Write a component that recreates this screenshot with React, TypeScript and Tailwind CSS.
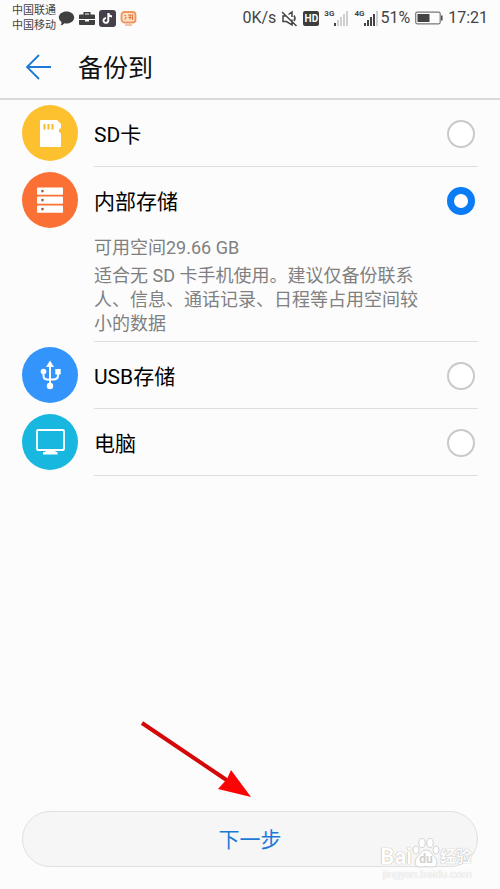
import { useState } from "react";

interface BackupTarget {
  id: string;
  label: string;
  color: string;
  icon: React.ReactNode;
  space?: string;
  note?: string;
}

const SdIcon = () => (
  <svg viewBox="0 0 56 56" className="size-14" fill="none" aria-hidden="true">
    <path
      d="M18 16a1 1 0 0 1 1-1h16l4 4v4l-2 1.500v2.500l2 1.500V41a1 1 0 0 1-1 1H19a1 1 0 0 1-1-1z"
      fill="#fff"
    />
    <path d="M22.500 19v5.500M26.500 19v5.500M30.500 19v5.500" stroke="#fbc02d" strokeWidth="2.200" />
  </svg>
);

const ServerIcon = () => (
  <svg viewBox="0 0 56 56" className="size-14" fill="#fff" aria-hidden="true">
    <rect x="15" y="15.500" width="26" height="7.300" rx="0.800" />
    <rect x="15" y="24.500" width="26" height="7.300" rx="0.800" />
    <rect x="15" y="33.500" width="26" height="7.300" rx="0.800" />
    <g fill="#9a5a3c">
      <circle cx="20.500" cy="19.100" r="1.300" />
      <circle cx="20.500" cy="28.100" r="1.300" />
      <circle cx="20.500" cy="37.100" r="1.300" />
    </g>
  </svg>
);

const UsbIcon = () => (
  <svg viewBox="0 0 56 56" className="size-14" fill="#fff" aria-hidden="true">
    <path d="M28 13.500l4 6.500h-8z" />
    <circle cx="28" cy="39" r="3.200" />
    <rect x="33.300" y="22" width="5.400" height="5.400" rx="0.600" />
    <circle cx="21.500" cy="24.500" r="2.800" />
    <path
      d="M28 18v20M21.500 25v3.500q0 4 4 4h5.500q5 0 5-4V25"
      fill="none"
      stroke="#fff"
      strokeWidth="2"
    />
  </svg>
);

const ComputerIcon = () => (
  <svg viewBox="0 0 56 56" className="size-14" fill="none" aria-hidden="true">
    <rect x="15" y="16" width="27" height="20" rx="1" stroke="#fff" strokeWidth="1.800" />
    <path d="M23.500 37h10v1h2v2.500H21V38h2.500z" fill="#fff" />
  </svg>
);

const targets: BackupTarget[] = [
  { id: "sd", label: "SD卡", color: "bg-[#fdc02f]", icon: <SdIcon /> },
  {
    id: "internal",
    label: "内部存储",
    color: "bg-[#fa7035]",
    icon: <ServerIcon />,
    space: "可用空间29.66 GB",
    note: "适合无 SD 卡手机使用。建议仅备份联系人、信息、通话记录、日程等占用空间较小的数据",
  },
  { id: "usb", label: "USB存储", color: "bg-[#3395fb]", icon: <UsbIcon /> },
  { id: "pc", label: "电脑", color: "bg-[#18b7e0]", icon: <ComputerIcon /> },
];

const Signal = ({ type, level }: { type: string; level: number }) => (
  <div className="flex h-4 items-end">
    <span className="self-start text-[8px] leading-[8px] font-bold">{type}</span>
    <svg width="15" height="16" viewBox="0 0 15 16" aria-hidden="true">
      {[3, 6, 9, 12, 15].map((height, i) => (
        <rect
          key={height}
          x={i * 3}
          y={16 - height}
          width="2"
          height={height}
          fill={i < level ? "#444" : "#cfcfcf"}
        />
      ))}
    </svg>
  </div>
);

const StatusBar = () => (
  <div className="flex h-9 items-start justify-between px-3 text-[#444]">
    <div className="flex gap-0.5 pt-[3px]">
      <div className="text-[11px] leading-[15px]">
        <div>中国联通</div>
        <div>中国移动</div>
      </div>
      <div className="flex items-center gap-1 text-[#404040]">
        <svg width="17" height="17" viewBox="0 0 17 17" fill="currentColor" aria-hidden="true">
          <path d="M8.500 1.500c4.300 0 7.700 2.600 7.700 6s-3.400 6-7.700 6q-1 0-2-.2Q5 15 2.500 15.500q1.300-1.500 1-3.400Q.8 10.300.8 7.500c0-3.400 3.400-6 7.700-6z" />
        </svg>
        <svg width="16" height="15" viewBox="0 0 16 15" fill="currentColor" aria-hidden="true">
          <path
            fillRule="evenodd"
            d="M4.500 3.500V1h7v2.500H15a1 1 0 0 1 1 1V8H0V4.500a1 1 0 0 1 1-1zM6 3.500h4v-1H6zM0 9h6v1.500h4V9h6v4a1 1 0 0 1-1 1H1a1 1 0 0 1-1-1z"
          />
        </svg>
        <svg width="17" height="17" viewBox="0 0 17 17" aria-hidden="true">
          <rect width="17" height="17" rx="3" fill="#46404a" />
          <path
            d="M9.300 3v7.600a2.400 2.400 0 1 1-2.200-2.500M9.300 3.200q.5 3 3.700 3.300"
            fill="none"
            stroke="#fff"
            strokeWidth="1.900"
          />
        </svg>
        <svg width="17" height="17" viewBox="0 0 17 17" aria-hidden="true">
          <rect x="1.500" y="2" width="14" height="10.500" rx="3" fill="#fbe3c8" stroke="#ee9560" strokeWidth="1.800" />
          <path d="M4.500 5l1.500 1M4.500 9.500l2-2.500M8 5h4.500v5M8.500 7.500h3M10 5v4.500" stroke="#e5763c" strokeWidth="1.200" fill="none" />
          <path d="M5 15h7" stroke="#f3b08a" strokeWidth="1.500" />
        </svg>
      </div>
    </div>
    <div className="flex h-9 items-center gap-[5px] text-base">
      <span>0K/s</span>
      <svg width="17" height="17" viewBox="0 0 17 17" fill="none" stroke="currentColor" strokeWidth="1.500" aria-hidden="true">
        <path d="M5.500 6H2v5.500h3.500l5.500 3.500V9.500M7.500 4.500L11 2v5M13 5.500q2 3 0 5.500M1 2l14.500 14" />
      </svg>
      <span className="flex h-[15px] w-4 items-center justify-center rounded-[2px] bg-[#3c3c3c] text-[10px] font-bold text-white">
        HD
      </span>
      <Signal type="3G" level={1} />
      <Signal type="4G" level={4} />
      <span className="-ml-1">51%</span>
      <svg width="28" height="14" viewBox="0 0 28 14" aria-hidden="true">
        <rect x="0.700" y="1.200" width="24.500" height="11.600" rx="1.500" fill="none" stroke="#777" strokeWidth="1.200" />
        <rect x="2.500" y="3" width="12" height="8" fill="#444" />
        <path d="M26.800 4.500v5" stroke="#444" strokeWidth="1.500" />
      </svg>
      <span>17:21</span>
    </div>
  </div>
);

const Watermark = () => (
  <div className="pointer-events-none absolute right-7 bottom-2 text-white [text-shadow:0_0_1px_#888]">
    <div className="flex items-end justify-end">
      <span className="text-[22px] leading-6 font-bold">Bai</span>
      <span className="relative flex w-7 justify-center">
        <svg width="28" height="32" viewBox="0 0 28 32" fill="#fff" stroke="#c9c9c9" strokeWidth="0.800" aria-hidden="true">
          <ellipse cx="4" cy="13" rx="3" ry="4" />
          <ellipse cx="10" cy="6" rx="3.200" ry="4.500" />
          <ellipse cx="18" cy="6" rx="3.200" ry="4.500" />
          <ellipse cx="24" cy="13" rx="3" ry="4" />
          <path d="M14 13q4 0 6 4 5 4 5 8 0 5-5 5-3 0-6-.5-3 .5-6 .5-5 0-5-5 0-4 5-8 2-4 6-4z" />
        </svg>
        <span className="absolute bottom-1 text-xs leading-3 font-bold text-[#d0d0d0] [text-shadow:none]">du</span>
      </span>
      <span className="text-base leading-6 font-bold">经验</span>
    </div>
    <div className="text-right text-[11px] leading-3 text-[#f7f7f7] [text-shadow:0_0_1px_#ccc]">
      jingyan.baidu.com
    </div>
  </div>
);

const App = () => {
  const [selected, setSelected] = useState("internal");

  return (
    <div className="relative flex min-h-screen flex-col bg-[#fcfcfc] font-['Roboto','Noto_Sans_CJK_SC',sans-serif]">
      <StatusBar />
      <header className="flex h-[64px] items-center gap-6 border-b-2 border-[#d9d9d9] px-6">
        <button type="button" aria-label="返回" className="text-[#1c7ad6]">
          <svg width="30" height="28" viewBox="0 0 30 28" fill="none" stroke="currentColor" strokeWidth="1.800" aria-hidden="true">
            <path d="M15 2L3 14l12 12M3 14h24" />
          </svg>
        </button>
        <h1 className="pt-1 text-[25px] leading-8 text-[#111]">备份到</h1>
      </header>

      <main className="flex-1 px-[22px]">
        {targets.map((item) => (
          <div key={item.id} className="flex gap-4 pt-px">
            <div className={`mt-1 size-14 shrink-0 rounded-full ${item.color}`}>{item.icon}</div>
            <div className="min-w-0 flex-1 border-b border-[#dedede] pr-[3px]">
              <div className="flex h-[65px] items-center justify-between">
                <label htmlFor={item.id} className="flex-1 pt-0.5 text-[21px] leading-7 text-black">
                  {item.label}
                </label>
                <input
                  type="radio"
                  id={item.id}
                  name="target"
                  checked={selected === item.id}
                  onChange={() => setSelected(item.id)}
                  className="size-7 appearance-none rounded-full border-2 border-[#c9c9c9] bg-white checked:border-[7px] checked:border-[#0a7cf5]"
                />
              </div>
              {item.note && (
                <div className="max-w-[330px] pt-[3px] pb-[5px] text-lg leading-6 text-[#808080]">
                  <p className="pb-1">{item.space}</p>
                  <p>{item.note}</p>
                </div>
              )}
            </div>
          </div>
        ))}
      </main>

      <footer className="relative px-[22px] pb-[22px]">
        <svg
          width="112"
          height="78"
          viewBox="0 0 112 78"
          className="pointer-events-none absolute bottom-[91px] left-[140px]"
          aria-hidden="true"
        >
          <path d="M2 3l86 58" stroke="#d40808" strokeWidth="4" />
          <path d="M111 77L91 50l-4 9-9 10z" fill="#fa0505" />
        </svg>
        <button
          type="button"
          className="h-14 w-full rounded-full border border-[#e0e0e0] bg-[#f6f6f6] pt-1 text-[21px] text-[#1c7ad6]"
        >
          下一步
        </button>
        <Watermark />
      </footer>
    </div>
  );
};

export default App;
